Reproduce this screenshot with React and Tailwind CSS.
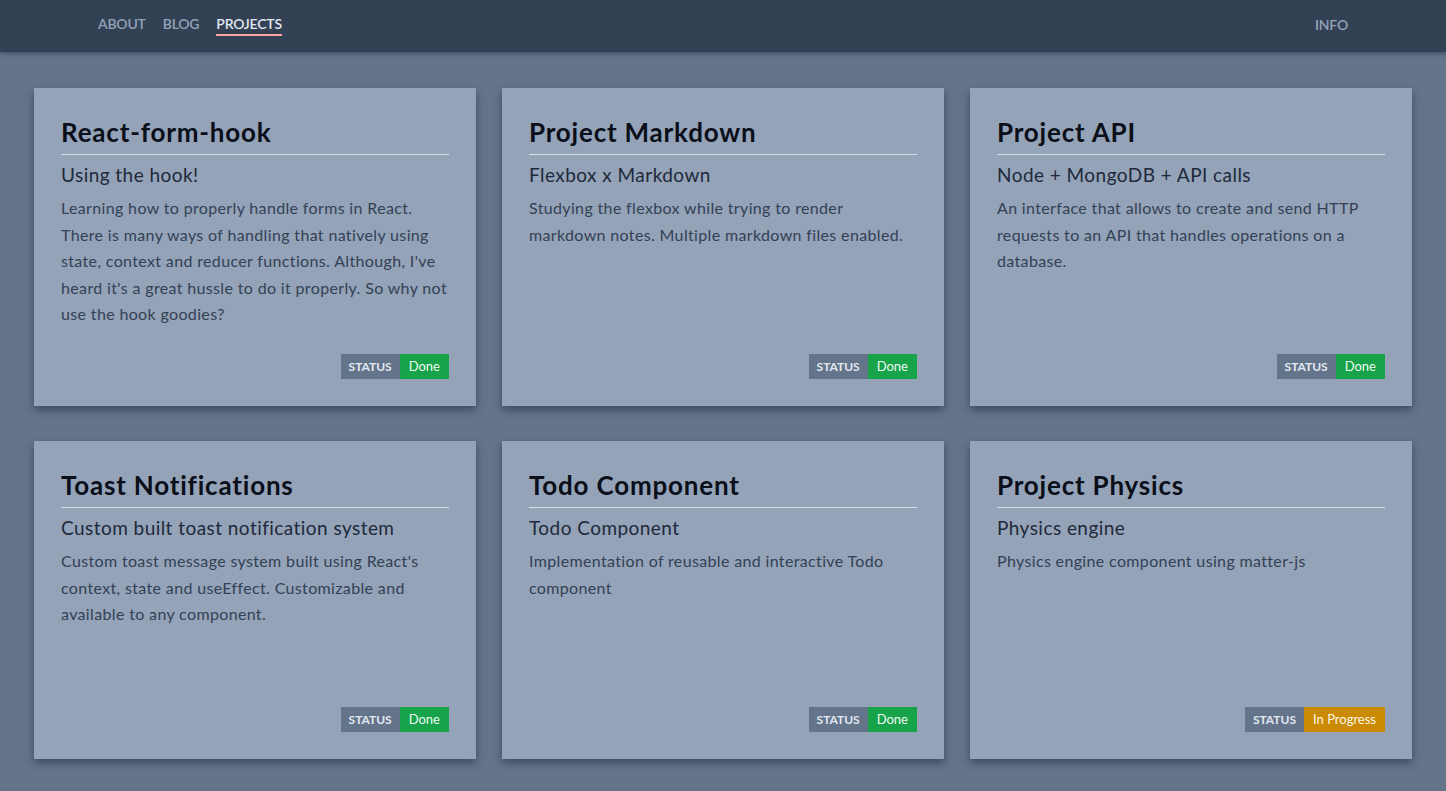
import React from "react";

const projects = [
  {
    title: "React-form-hook",
    subtitle: "Using the hook!",
    text: "Learning how to properly handle forms in React. There is many ways of handling that natively using state, context and reducer functions. Although, I've heard it's a great hussle to do it properly. So why not use the hook goodies?",
    status: "Done",
  },
  {
    title: "Project Markdown",
    subtitle: "Flexbox x Markdown",
    text: "Studying the flexbox while trying to render markdown notes. Multiple markdown files enabled.",
    status: "Done",
  },
  {
    title: "Project API",
    subtitle: "Node + MongoDB + API calls",
    text: "An interface that allows to create and send HTTP requests to an API that handles operations on a database.",
    status: "Done",
  },
  {
    title: "Toast Notifications",
    subtitle: "Custom built toast notification system",
    text: "Custom toast message system built using React's context, state and useEffect. Customizable and available to any component.",
    status: "Done",
  },
  {
    title: "Todo Component",
    subtitle: "Todo Component",
    text: "Implementation of reusable and interactive Todo component",
    status: "Done",
  },
  {
    title: "Project Physics",
    subtitle: "Physics engine",
    text: "Physics engine component using matter-js",
    status: "In Progress",
  },
];

function Card({ project }) {
  const done = project.status === "Done";
  return (
    <div className="flex h-[318px] flex-col bg-[#94a3b8] px-[27px] pt-[27px] pb-[27px] shadow-[0_4px_8px_rgba(15,23,42,0.45)]">
      <h2 className="border-b border-[#d5dde8] pb-[5px] text-[26px] font-bold leading-[34px] tracking-[0.8px] text-[#0a0f1a]">
        {project.title}
      </h2>
      <h3 className="mt-[7px] text-[19px] leading-[26px] tracking-[0.45px] text-[#1e293b]">
        {project.subtitle}
      </h3>
      <p className="mt-[7px] text-[16px] leading-[26.5px] tracking-[0.35px] text-[#334155]">
        {project.text}
      </p>
      <div className="mt-auto flex justify-end">
        <span className="flex h-[25px] items-center bg-[#64748b] px-[8px] text-[12px] font-bold text-[#e2e8f0]">
          STATUS
        </span>
        <span
          className={
            done
              ? "flex h-[25px] items-center bg-[#16a34a] px-[9px] text-[13px] text-[#eefbf2]"
              : "flex h-[25px] items-center bg-[#ca8a04] px-[9px] text-[13px] text-[#fdf6e3]"
          }
        >
          {project.status}
        </span>
      </div>
    </div>
  );
}

export default function App() {
  return (
    <div
      className="min-h-[791px] bg-[#64748b]"
      style={{ fontFamily: "Lato, 'Noto Sans', sans-serif" }}
    >
      <header className="flex h-[52px] items-center justify-between bg-[#334155] px-[98px] pb-[4px] shadow-[0_2px_4px_rgba(15,23,42,0.35)]">
        <nav className="flex gap-[17px] text-[14px] font-semibold tracking-[-0.2px]">
          <a className="text-[#94a3b8]">ABOUT</a>
          <a className="text-[#94a3b8]">BLOG</a>
          <a className="border-b-2 border-[#fca5a5] text-[#e2e8f0]">PROJECTS</a>
        </nav>
        <a className="text-[14px] font-semibold tracking-[-0.2px] text-[#94a3b8]">INFO</a>
      </header>
      <main className="grid grid-cols-3 gap-x-[26px] gap-y-[35px] px-[34px] pt-[36px]">
        {projects.map((p) => (
          <Card key={p.title} project={p} />
        ))}
      </main>
    </div>
  );
}
